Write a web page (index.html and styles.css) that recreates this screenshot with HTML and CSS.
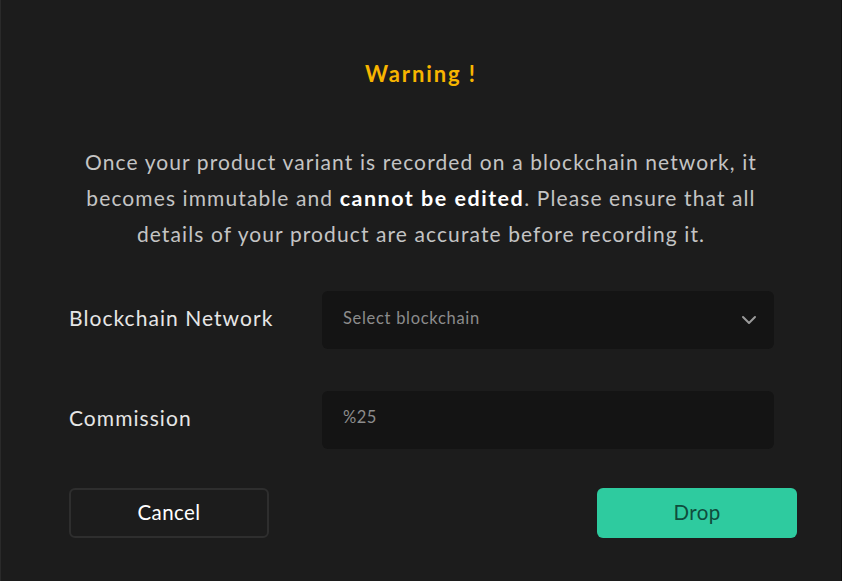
FILE: index.html
```html
<!DOCTYPE html>
<html>
<head>
<meta charset="utf-8">
<link rel="stylesheet" href="styles.css">
</head>
<body>
<div class="modal">
  <h2 class="title">Warning !</h2>
  <p class="message">Once your product variant is recorded on a blockchain network, it becomes immutable and <strong>cannot be edited</strong>. Please ensure that all details of your product are accurate before recording it.</p>
  <div class="form">
    <div class="row">
      <label class="label">Blockchain Network</label>
      <div class="field select">
        <span class="placeholder">Select blockchain</span>
        <svg class="chevron" width="16" height="10" viewBox="0 0 16 10"><path d="M2 2 L8 8 L14 2" fill="none" stroke="#9a9a9a" stroke-width="2" stroke-linecap="round" stroke-linejoin="round"/></svg>
      </div>
    </div>
    <div class="row">
      <label class="label">Commission</label>
      <div class="field">
        <span class="value">%25</span>
      </div>
    </div>
  </div>
  <div class="actions">
    <button class="btn cancel">Cancel</button>
    <button class="btn drop">Drop</button>
  </div>
</div>
</body>
</html>
```

FILE: styles.css
```css
html, body {
  margin: 0;
  padding: 0;
  background: #1c1c1c;
}
body {
  font-family: Lato, "Noto Sans", sans-serif;
  width: 842px;
  height: 581px;
  overflow: hidden;
}
.modal {
  box-sizing: border-box;
  width: 842px;
  height: 581px;
  padding: 60px 44px 0 68px;
  border-left: 1px solid #2a2a2a;
  border-right: 1px solid #111;
  display: flex;
  flex-direction: column;
}
.title {
  margin: 0;
  text-align: center;
  color: #f7b500;
  font-size: 22px;
  font-weight: 700;
  letter-spacing: 1.9px;
  line-height: 28px;
  padding-right: 24px;
}
.message {
  margin: 56px 0 0 0;
  padding: 0 24px 0 0;
  text-align: center;
  color: #c4c4c4;
  font-size: 21px;
  line-height: 36px;
  font-weight: 400;
  letter-spacing: 1.1px;
}
.message strong {
  color: #ffffff;
  font-weight: 700;
  font-size: 21.5px;
  letter-spacing: 1.5px;
}
.form {
  margin-top: 39px;
  display: flex;
  flex-direction: column;
  gap: 42px;
  padding-right: 23px;
}
.row {
  display: flex;
  align-items: center;
}
.label {
  width: 253px;
  color: #e6e6e6;
  font-size: 21px;
  letter-spacing: 1.05px;
  margin-top: -6px;
}
.label-commission {
  margin-top: -8px;
}
.field {
  flex: 1;
  height: 58px;
  background: #141414;
  border-radius: 6px;
  display: flex;
  align-items: center;
  justify-content: space-between;
  padding: 0 17px 0 21px;
  box-sizing: border-box;
}
.placeholder {
  color: #8c8c8c;
  font-size: 16.5px;
  letter-spacing: 0.7px;
  margin-top: -5px;
}
.value {
  color: #8c8c8c;
  font-size: 16.5px;
  letter-spacing: 0.5px;
  margin-top: -6px;
}
.chevron {
  display: block;
  margin-top: -1px;
}
.actions {
  margin-top: 39px;
  display: flex;
  justify-content: space-between;
}
.btn {
  width: 200px;
  height: 50px;
  border-radius: 6px;
  font-family: Lato, "Noto Sans", sans-serif;
  font-size: 20.5px;
  letter-spacing: 0.4px;
  box-sizing: border-box;
  cursor: pointer;
  padding-bottom: 4px;
}
.cancel {
  background: #1c1c1c;
  border: 2px solid #2e2e2e;
  color: #ffffff;
}
.drop {
  background: #2ecb9f;
  border: none;
  color: #0f4d3c;
}
```
